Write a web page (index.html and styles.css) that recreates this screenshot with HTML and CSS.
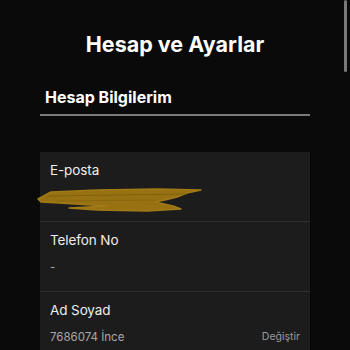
FILE: index.html
```html
<!DOCTYPE html>
<html lang="tr">
<head>
<meta charset="utf-8">
<link rel="stylesheet" href="styles.css">
</head>
<body>
<div class="page">
  <h1 class="title">Hesap ve Ayarlar</h1>
  <div class="section">
    <h2 class="section-title">Hesap Bilgilerim</h2>
    <div class="card">
      <div class="row">
        <div class="label">E-posta</div>
        <div class="value value-redacted">
          <svg class="scribble" width="170" height="28" viewBox="0 0 170 28">
            <path d="M1 12 L14 5 L60 3 L120 2 L164 3 L150 6 L140 10 L128 13 L118 15 L136 19 L144 22 L110 24 L60 23 L32 21 L70 19 L22 16 L4 15 Z" fill="#987212" stroke="#a07a16" stroke-width="1.5" stroke-linejoin="round"/>
            <path d="M10 9 L150 7" stroke="#7a5c0c" stroke-width="0.8" fill="none"/>
            <path d="M20 14 L120 13" stroke="#7e600e" stroke-width="0.6" fill="none"/>
          </svg>
        </div>
      </div>
      <div class="row">
        <div class="label">Telefon No</div>
        <div class="value">-</div>
      </div>
      <div class="row">
        <div class="label">Ad Soyad</div>
        <div class="value value-split">
          <span>7686074 İnce</span>
          <span class="action">Değiştir</span>
        </div>
      </div>
    </div>
  </div>
  <div class="scrollbar"></div>
</div>
</body>
</html>
```

FILE: styles.css
```css
html, body {
  margin: 0;
  padding: 0;
  background: #0a0a0a;
}
body {
  font-family: Inter, "Noto Sans", sans-serif;
  color: #f2f2f2;
  width: 350px;
  height: 350px;
  overflow: hidden;
}
.page {
  position: relative;
  height: 350px;
  padding-top: 30px;
  box-sizing: border-box;
}
.title {
  margin: 0;
  font-size: 21.5px;
  line-height: 28px;
  font-weight: 700;
  text-align: center;
  color: #ffffff;
}
.section {
  margin: 0 40px;
  padding-top: 29px;
}
.section-title {
  margin: 0;
  padding: 0 0 7px 5px;
  font-size: 16px;
  line-height: 20px;
  font-weight: 700;
  color: #ffffff;
  border-bottom: 2px solid #7a7a7a;
}
.card {
  margin-top: 36px;
  background: #1c1c1c;
}
.row {
  padding: 8px 10px 14px 10px;
  border-bottom: 1px solid #2e2e2e;
}
.label {
  font-size: 13.5px;
  line-height: 20px;
  letter-spacing: -0.1px;
  color: #eeeeee;
}
.value {
  margin-top: 7px;
  font-size: 11.5px;
  line-height: 20px;
  color: #a8a8a8;
  height: 20px;
}
.value-redacted {
  position: relative;
}
.scribble {
  position: absolute;
  left: -13px;
  top: 0;
}
.value-split {
  display: flex;
  justify-content: space-between;
}
.action {
  font-size: 10.5px;
  color: #9a9a9a;
}
.scrollbar {
  position: absolute;
  right: 3px;
  top: 0;
  width: 3px;
  height: 72px;
  background: #7a7a7a;
  border-radius: 2px;
}
```
